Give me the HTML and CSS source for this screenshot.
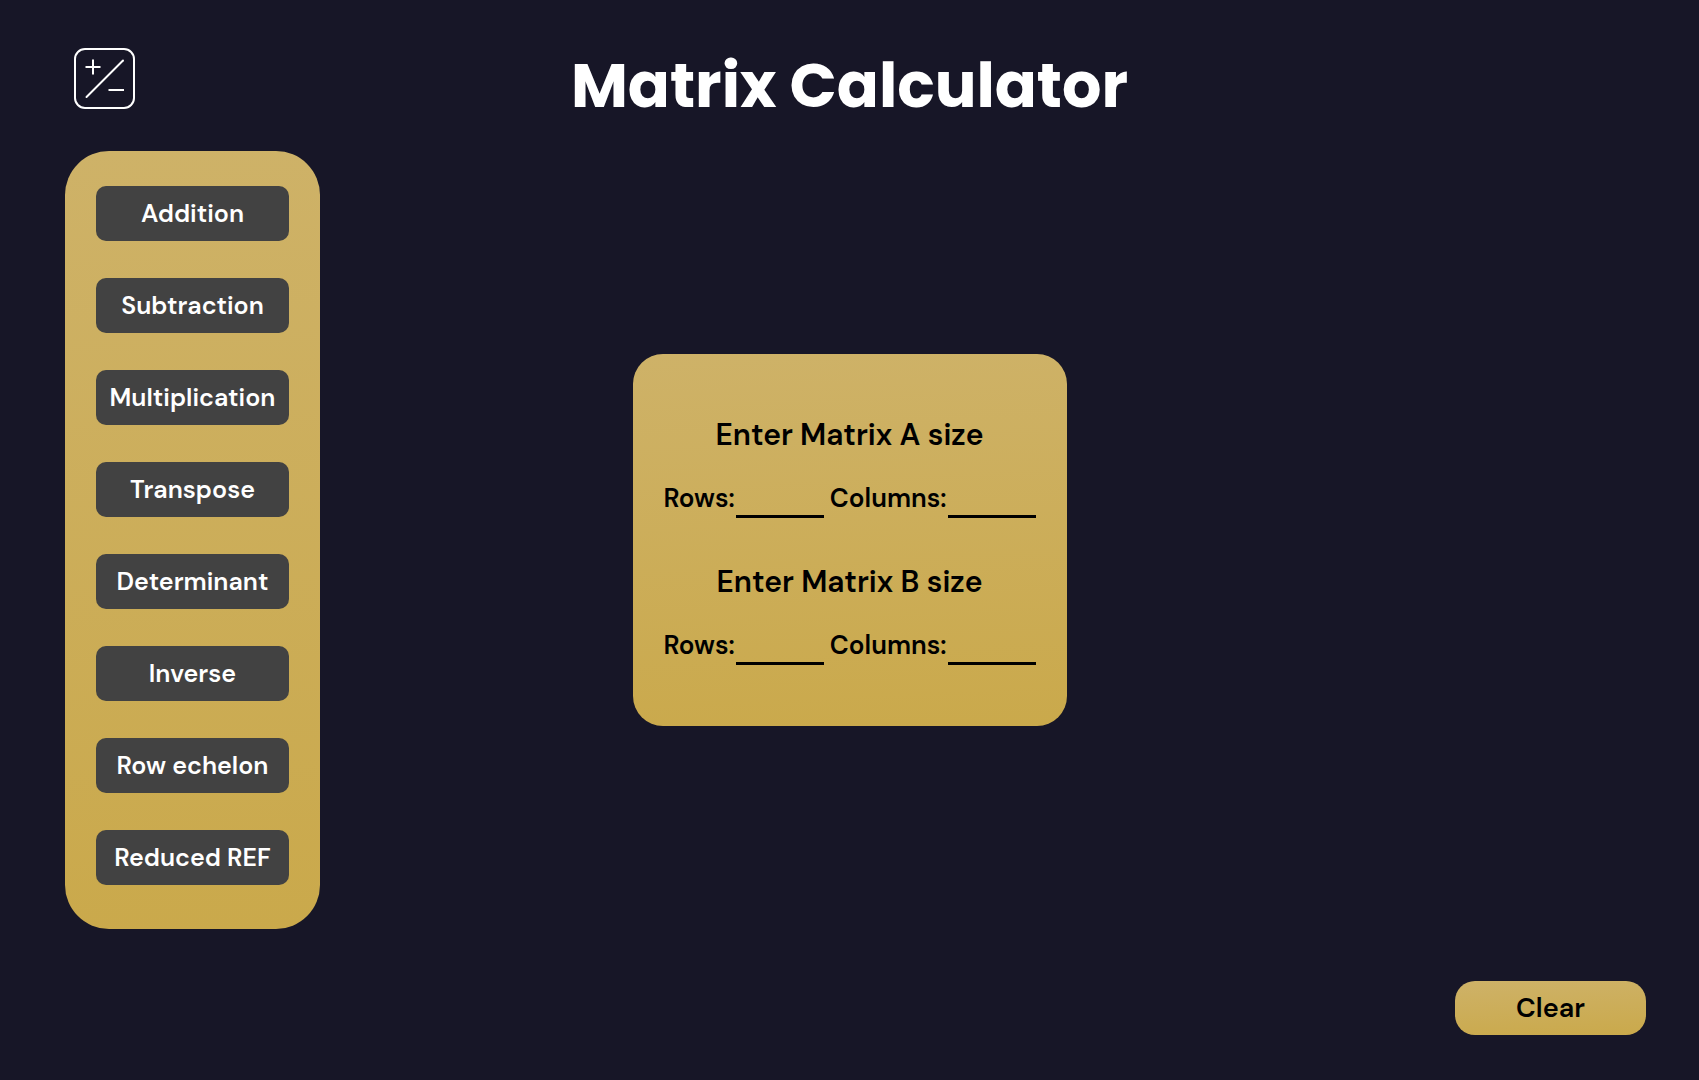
FILE: index.html
```html
<!DOCTYPE html>
<html lang="en">
<head>
  <meta charset="utf-8">
  <meta name="viewport" content="width=device-width, initial-scale=1">
  <title>Matrix Calculator</title>
  <link rel="stylesheet" href="styles.css">
</head>
<body class="page">
  <header class="header">
    <svg class="logo" viewBox="0 0 61 61" aria-hidden="true">
      <rect x="1" y="1" width="59" height="59" rx="10"/>
      <path d="M11.5 19H26.5M19 11.5V26.5M34.5 42H50"/>
      <path d="M12.500 49L49 12.500" stroke-linecap="round"/>
    </svg>
    <h1 class="title">Matrix Calculator</h1>
  </header>

  <main class="main">
    <nav class="operations" aria-label="Operations">
      <button class="operation" type="button">Addition</button>
      <button class="operation" type="button">Subtraction</button>
      <button class="operation" type="button">Multiplication</button>
      <button class="operation" type="button">Transpose</button>
      <button class="operation" type="button">Determinant</button>
      <button class="operation" type="button">Inverse</button>
      <button class="operation" type="button">Row echelon</button>
      <button class="operation" type="button">Reduced REF</button>
    </nav>

    <form class="card" id="sizes">
      <section class="matrix">
        <h2 class="matrix-title">Enter Matrix A size</h2>
        <div class="fields">
          <div class="field">
            <label for="a-rows">Rows:</label>
            <input class="size" id="a-rows" type="text" inputmode="numeric">
          </div>
          <div class="field">
            <label for="a-columns">Columns:</label>
            <input class="size" id="a-columns" type="text" inputmode="numeric">
          </div>
        </div>
      </section>
      <section class="matrix">
        <h2 class="matrix-title">Enter Matrix B size</h2>
        <div class="fields">
          <div class="field">
            <label for="b-rows">Rows:</label>
            <input class="size" id="b-rows" type="text" inputmode="numeric">
          </div>
          <div class="field">
            <label for="b-columns">Columns:</label>
            <input class="size" id="b-columns" type="text" inputmode="numeric">
          </div>
        </div>
      </section>
    </form>
  </main>

  <footer class="footer">
    <button class="clear" type="reset" form="sizes">Clear</button>
  </footer>
</body>
</html>
```
FILE: styles.css
```css
* {
  box-sizing: border-box;
}

:root {
  --gold: linear-gradient(177deg, #ceb268, #caa94b);
}

.page {
  display: grid;
  grid-template-rows: auto 1fr auto;
  min-height: 100vh;
  margin: 0;
  background: #171627;
  color: #000;
  font-family: "DM Sans", Inter, sans-serif;
  font-weight: 600;
}

.header {
  display: grid;
  grid-template-columns: 1fr auto 1fr;
  align-items: start;
  padding: 48px 74px 27px;
}

.logo {
  width: 61px;
  height: 61px;
  fill: none;
  stroke: #fff;
  stroke-width: 2;
}

.title {
  margin: 0;
  color: #fff;
  font-family: Poppins, Inter, sans-serif;
  font-size: 62px;
  font-weight: 700;
  line-height: 76px;
}

.main {
  display: grid;
  grid-template-columns: 1fr auto 1fr;
  align-items: center;
  padding: 0 65px;
}

.operations {
  display: flex;
  flex-direction: column;
  gap: 37px;
  justify-self: start;
  width: 255px;
  padding: 35px 31px 44px;
  border-radius: 44px;
  background: var(--gold);
}

.operation {
  height: 55px;
  padding: 0;
  border: 0;
  border-radius: 10px;
  background: #424242;
  color: #fff;
  font: inherit;
  font-size: 25px;
}

.card {
  display: flex;
  flex-direction: column;
  gap: 44px;
  width: 434px;
  padding: 61px 31px;
  border-radius: 30px;
  background: var(--gold);
}

.matrix-title {
  margin: 0 0 20px;
  font-size: 30px;
  font-weight: 600;
  line-height: 40px;
  text-align: center;
}

.fields {
  display: flex;
  justify-content: space-between;
}

.field {
  display: flex;
  align-items: flex-end;
  gap: 1px;
  font-size: 26px;
  line-height: 40px;
}

.size {
  width: 88px;
  height: 43px;
  padding: 0;
  border: 0;
  border-bottom: 3px solid #000;
  border-radius: 0;
  background: transparent;
  font: inherit;
  text-align: center;
}

.footer {
  display: flex;
  justify-content: flex-end;
  padding: 52px 53px 45px;
}

.clear {
  width: 191px;
  height: 54px;
  padding: 0 0 2px;
  border: 0;
  border-radius: 20px;
  background: var(--gold);
  color: #000;
  font: inherit;
  font-size: 27px;
}
```
